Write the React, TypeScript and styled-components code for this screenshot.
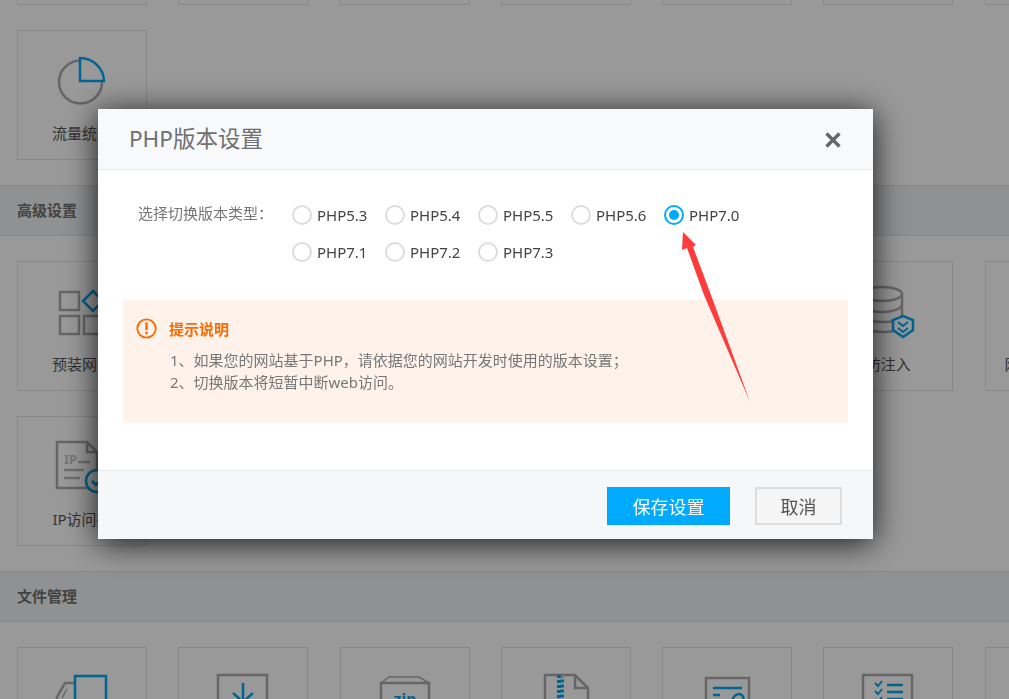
import React from 'react';
import styled, { createGlobalStyle } from 'styled-components';

const FONT = '"Noto Sans", "Noto Sans CJK SC", sans-serif';
const GRAY = '#aaaaaa';
const BLUE = '#00a8f0';

const GlobalStyle = createGlobalStyle`
  html, body {
    margin: 0;
    height: 100%;
    overflow: hidden;
    background: #fff;
    font-family: ${FONT};
  }
`;

const Page = styled.div`
  width: 1009px;
  height: 699px;
  overflow: hidden;
`;

const Grid = styled.div<{ $shift?: boolean }>`
  display: grid;
  grid-template-columns: repeat(7, 130px);
  gap: 25px 31.28px;
  padding: 25px 0 25px 17px;
  margin-top: ${p => (p.$shift ? '-150px' : '0')};
`;

const Card = styled.div`
  box-sizing: border-box;
  height: 130px;
  border: 1px solid #e3e3e3;
  display: flex;
  flex-direction: column;
  align-items: center;
  padding-top: 21px;
`;

const CardIcon = styled.svg`
  width: 70px;
  height: 60px;
  flex: none;
  fill: none;
`;

const CardLabel = styled.div`
  margin-top: 11px;
  font-size: 15px;
  line-height: 20px;
  color: #555;
  white-space: nowrap;
`;

const SectionHead = styled.div`
  box-sizing: border-box;
  height: 51px;
  padding: 0 0 2px 17px;
  display: flex;
  align-items: center;
  background: #f0f2f5;
  border-top: 1px solid #e0e0e0;
  border-bottom: 1px solid #e0e0e0;
  font-size: 15px;
  font-weight: 700;
  color: #707070;
`;

const Overlay = styled.div`
  position: fixed;
  inset: 0;
  background: rgba(0, 0, 0, 0.4);
  padding: 109px 0 0 98px;
`;

const Modal = styled.div`
  width: 775px;
  height: 430px;
  display: flex;
  flex-direction: column;
  background: #fff;
  box-shadow: 0 4px 30px rgba(0, 0, 0, 0.85);
`;

const ModalHead = styled.div`
  box-sizing: border-box;
  height: 61px;
  flex: none;
  padding: 0 31px;
  display: flex;
  align-items: center;
  justify-content: space-between;
  background: #f8f9fb;
  border-bottom: 1px solid #e8ebee;
`;

const ModalTitle = styled.div`
  font-size: 22.5px;
  line-height: 30px;
  color: #6f6f6f;
`;

const CloseIcon = styled.svg`
  width: 18px;
  height: 18px;
  margin-top: 1px;
`;

const ModalBody = styled.div`
  flex: 1;
  padding: 35px 25px 0;
`;

const Field = styled.div`
  display: flex;
  padding-left: 15px;
`;

const FieldLabel = styled.div`
  width: 154px;
  flex: none;
  font-size: 15px;
  line-height: 16px;
  color: #777;
`;

const RadioGroup = styled.div`
  display: grid;
  grid-template-columns: repeat(5, 93px);
  row-gap: 17px;
`;

const RadioItem = styled.label`
  display: flex;
  align-items: center;
  gap: 5px;
  height: 20px;
  font-size: 15px;
  color: #444;
`;

const RadioMark = styled.span<{ $checked?: boolean }>`
  box-sizing: border-box;
  width: 20px;
  height: 20px;
  border-radius: 50%;
  border: 2px solid ${p => (p.$checked ? '#00aaff' : '#dddddd')};
  display: flex;
  align-items: center;
  justify-content: center;
  &::after {
    content: '';
    display: ${p => (p.$checked ? 'block' : 'none')};
    width: 10px;
    height: 10px;
    border-radius: 50%;
    background: #00aaff;
  }
`;

const Notice = styled.div`
  box-sizing: border-box;
  height: 123px;
  margin-top: 38px;
  padding: 18px 0 0 13px;
  background: #fff2eb;
`;

const NoticeTitle = styled.div`
  display: flex;
  align-items: center;
  gap: 12px;
  height: 20px;
  font-size: 15px;
  font-weight: 700;
  color: #ff6a00;
`;

const NoticeList = styled.div`
  margin: 11px 0 0 34px;
  font-size: 15px;
  line-height: 22px;
  color: #777;
`;

const ModalFoot = styled.div`
  box-sizing: border-box;
  height: 69px;
  flex: none;
  padding: 16px 31px 0 0;
  display: flex;
  justify-content: flex-end;
  gap: 25px;
  background: #f5f7f9;
  border-top: 1px solid #e8ebee;
`;

const FootButton = styled.button<{ $primary?: boolean }>`
  box-sizing: border-box;
  width: ${p => (p.$primary ? '123px' : '87px')};
  height: 38px;
  padding: 0;
  font-family: ${FONT};
  font-size: 18px;
  border: ${p => (p.$primary ? '1px solid #00a8fa' : '2px solid #dddddd')};
  background: ${p => (p.$primary ? '#00aaff' : '#f5f5f5')};
  color: ${p => (p.$primary ? '#fff' : '#555')};
`;

const Arrow = styled.svg`
  position: absolute;
  left: 0;
  top: 0;
  width: 1009px;
  height: 699px;
  pointer-events: none;
`;

const s = { stroke: GRAY, strokeWidth: 2.5 };
const b = { stroke: BLUE, strokeWidth: 2.5 };

const PieIcon = () => (
  <CardIcon viewBox="0 0 70 60">
    <circle cx="33.5" cy="30" r="21.5" {...s} />
    <path d="M33 6A24 24 0 0 1 57 29H33Z" {...b} fill="#fff" />
  </CardIcon>
);

const AppsIcon = () => (
  <CardIcon viewBox="0 0 70 60">
    <rect x="13" y="9" width="19" height="18" {...s} />
    <rect x="13" y="33" width="19" height="18" {...s} />
    <rect x="37" y="33" width="19" height="18" {...s} />
    <path d="M46 8L56 18L46 28L36 18Z" {...b} />
  </CardIcon>
);

const IpIcon = () => (
  <CardIcon viewBox="0 0 70 60">
    <path d="M40 4H10V50H50V14Z" {...s} />
    <path d="M40 4V14H50" {...s} />
    <text x="17" y="26" fontSize="13" fontWeight="700" fill="#c4c4c4" fontFamily="Noto Sans">IP</text>
    <path d="M31 24H43M17 32H37M17 40H33" {...s} stroke="#b8b8b8" />
    <circle cx="50" cy="43" r="11" {...b} fill="#fff" />
    <path d="M45 43L49 47L55 40" {...b} />
  </CardIcon>
);

const DbIcon = () => (
  <CardIcon viewBox="0 0 70 60">
    <ellipse cx="29" cy="11" rx="20" ry="7" {...s} />
    <path d="M9 11V42C9 46 19 49 29 49C33 49 37 49 40 48M49 11V34M9 21C9 26 19 29 29 29S49 26 49 21M9 31C9 36 19 39 29 39C33 39 37 39 40 38" {...s} />
    <path d="M50 33L60 37V47L50 54L40 47V37Z" {...b} fill="#fff" />
    <path d="M45 39L50 43L55 39M45 45L50 49L55 45" {...b} strokeWidth={2} />
  </CardIcon>
);

const CopyIcon = () => (
  <CardIcon viewBox="0 0 70 60">
    <path d="M28 14H18L10 28V60H28" {...s} />
    <path d="M20 20L15 29" {...s} strokeWidth={1.5} />
    <rect x="28" y="7" width="31" height="50" {...b} />
  </CardIcon>
);

const ImportIcon = () => (
  <CardIcon viewBox="0 0 70 60">
    <rect x="10" y="6" width="49" height="50" {...s} />
    <path d="M35 14V32M25 24L35 33L45 24" {...b} />
  </CardIcon>
);

const ZipBoxIcon = () => (
  <CardIcon viewBox="0 0 70 60">
    <path d="M11 14L19 8H49L59 14" {...s} strokeWidth={1.5} />
    <rect x="11" y="14" width="48" height="42" {...s} />
    <text x="35" y="36" textAnchor="middle" fontSize="16" fontWeight="700" fill={BLUE} fontFamily="Noto Sans">zip</text>
  </CardIcon>
);

const ZipFileIcon = () => (
  <CardIcon viewBox="0 0 70 60">
    <path d="M44 6H14V56H57V19Z" {...s} />
    <path d="M44 6V19H57" {...s} />
    <path d="M28 6V30" stroke={BLUE} strokeWidth={4} strokeDasharray="3 2" />
    <path d="M31 8V32" stroke={BLUE} strokeWidth={4} strokeDasharray="3 2" strokeDashoffset="2.5" />
  </CardIcon>
);

const EditIcon = () => (
  <CardIcon viewBox="0 0 70 60">
    <rect x="14" y="9" width="43" height="47" {...s} />
    <path d="M21 19H50M21 26H28" {...b} />
    <path d="M40 34C40 28 44 25 47 25C50 25 52 28 52 34" {...b} />
  </CardIcon>
);

const ChecklistIcon = () => (
  <CardIcon viewBox="0 0 70 60">
    <rect x="10" y="6" width="49" height="50" {...s} />
    <path d="M22 14L25 17L29 12M22 22L25 25L29 20M22 30L25 33L29 28" {...b} strokeWidth={2} />
    <path d="M34 16H50M34 23H50M34 30H50" {...b} />
  </CardIcon>
);

const blanks = (n: number) => Array.from({ length: n }, (_, i) => <Card key={i} />);

const versions = ['5.3', '5.4', '5.5', '5.6', '7.0', '7.1', '7.2', '7.3'];

const App: React.FC = () => {
  return (
    <>
      <GlobalStyle />
      <Page>
        <Grid $shift>
          {blanks(7)}
          <Card>
            <PieIcon />
            <CardLabel>流量统计</CardLabel>
          </Card>
        </Grid>
        <SectionHead>高级设置</SectionHead>
        <Grid>
          <Card>
            <AppsIcon />
            <CardLabel>预装网站</CardLabel>
          </Card>
          {blanks(4)}
          <Card>
            <DbIcon />
            <CardLabel>防注入</CardLabel>
          </Card>
          <Card>
            <CardIcon viewBox="0 0 70 60" />
            <CardLabel>网站访问控制</CardLabel>
          </Card>
          <Card>
            <IpIcon />
            <CardLabel>IP访问控</CardLabel>
          </Card>
        </Grid>
        <SectionHead>文件管理</SectionHead>
        <Grid>
          <Card><CopyIcon /></Card>
          <Card><ImportIcon /></Card>
          <Card><ZipBoxIcon /></Card>
          <Card><ZipFileIcon /></Card>
          <Card><EditIcon /></Card>
          <Card><ChecklistIcon /></Card>
          <Card />
        </Grid>
      </Page>
      <Overlay>
        <Modal>
          <ModalHead>
            <ModalTitle>PHP版本设置</ModalTitle>
            <CloseIcon viewBox="0 0 18 18">
              <path d="M2.5 2.5L15.5 15.5M15.5 2.5L2.5 15.5" stroke="#666" strokeWidth="3.4" />
            </CloseIcon>
          </ModalHead>
          <ModalBody>
            <Field>
              <FieldLabel>选择切换版本类型：</FieldLabel>
              <RadioGroup>
                {versions.map(v => (
                  <RadioItem key={v}>
                    <RadioMark $checked={v === '7.0'} />
                    PHP{v}
                  </RadioItem>
                ))}
              </RadioGroup>
            </Field>
            <Notice>
              <NoticeTitle>
                <svg width="21" height="21" viewBox="0 0 21 21">
                  <circle cx="10.5" cy="10.5" r="9.2" fill="none" stroke="#ff6a00" strokeWidth="1.8" />
                  <path d="M10.5 4.5V12" stroke="#ff6a00" strokeWidth="2.4" />
                  <circle cx="10.5" cy="15" r="1.4" fill="#ff6a00" />
                </svg>
                提示说明
              </NoticeTitle>
              <NoticeList>
                <div>1、如果您的网站基于PHP，请依据您的网站开发时使用的版本设置；</div>
                <div>2、切换版本将短暂中断web访问。</div>
              </NoticeList>
            </Notice>
          </ModalBody>
          <ModalFoot>
            <FootButton $primary>保存设置</FootButton>
            <FootButton>取消</FootButton>
          </ModalFoot>
        </Modal>
      </Overlay>
      <Arrow viewBox="0 0 1009 699">
        <path d="M683 232L696 245L693 247L711 295L750 402L704 295L687 248L682 250Z" fill="#ff3b3b" />
      </Arrow>
    </>
  );
};

export default App;
